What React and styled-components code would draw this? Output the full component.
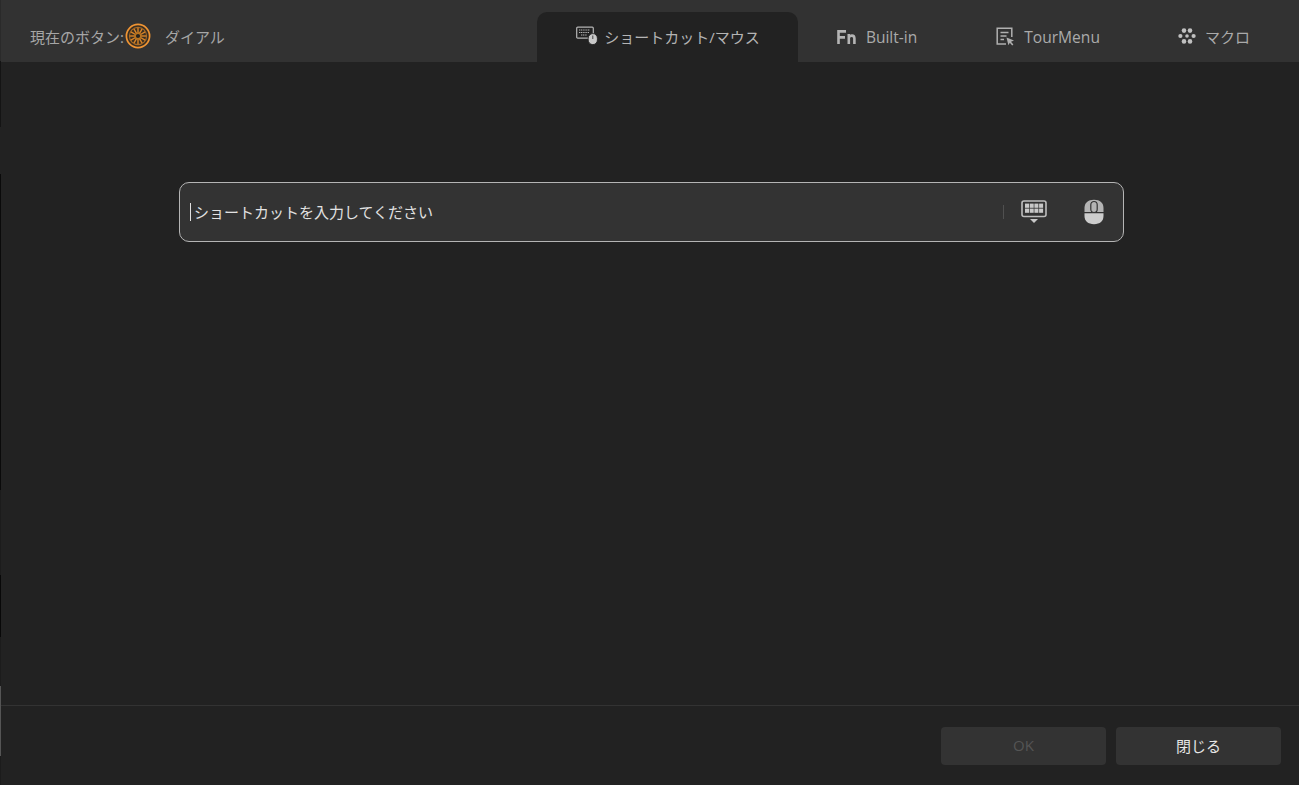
import React from "react";
import styled, { createGlobalStyle } from "styled-components";

const Global = createGlobalStyle`
  html, body { margin: 0; padding: 0; background: #222222; }
  body { font-family: "Open Sans", "Noto Sans CJK JP", sans-serif; overflow: hidden; }
  #root { height: 785px; }
`;

const Window = styled.div`
  height: 785px;
  display: flex;
  flex-direction: column;
  background: #222222;
  border-left: 1px solid transparent;
  border-image: linear-gradient(
      to bottom,
      #2a2a2a 0 62px,
      #141414 62px 128px,
      #222222 128px 175px,
      #0a0a0a 175px 490px,
      #1c1c1c 490px 575px,
      #080808 575px 636px,
      #1c1c1c 636px 685px,
      #555555 685px 755px,
      #1c1c1c 755px
    ) 1;
`;

const Header = styled.header`
  height: 62px;
  flex: none;
  display: flex;
  align-items: flex-end;
  justify-content: space-between;
  padding: 0 10px 0 29px;
  background: #323232;
`;

const Current = styled.div`
  height: 50px;
  box-sizing: border-box;
  padding-bottom: 2px;
  display: flex;
  align-items: center;
  font-size: 15px;
  color: #a6a6a6;
`;

const DialSlot = styled.span`
  display: flex;
  margin-left: 1px;
`;

const CurrentName = styled.span`
  margin-left: 14px;
`;

const Tabs = styled.nav`
  display: flex;
  height: 50px;
`;

const Tab = styled.div`
  display: flex;
  align-items: center;
  box-sizing: border-box;
  gap: ${(p) => p.$gap}px;
  padding: 0 ${(p) => p.$right}px ${(p) => (p.$size ? 1 : 2)}px 39px;
  font-size: ${(p) => p.$size || 15}px;
  color: ${(p) => (p.$active ? "#b4b4b4" : "#aaaaaa")};
  background: ${(p) => (p.$active ? "#222222" : "transparent")};
  border-radius: 10px 10px 0 0;
`;

const Main = styled.main`
  flex: 1;
  padding: 120px 175px 0 178px;
`;

const InputBox = styled.div`
  height: 60px;
  box-sizing: border-box;
  display: flex;
  align-items: center;
  padding: 0 19px 0 10px;
  background: #333333;
  border: 1px solid #b5b5b5;
  border-radius: 10px;
`;

const Caret = styled.span`
  width: 1px;
  height: 18px;
  background: #e0e0e0;
  margin-right: 3px;
`;

const Placeholder = styled.span`
  flex: 1;
  font-size: 15px;
  padding-bottom: 2px;
  color: #e2e2e2;
`;

const Separator = styled.span`
  width: 1px;
  height: 14px;
  background: #505050;
  margin-right: 17px;
`;

const KeyboardSlot = styled.span`
  display: flex;
  margin-right: 37px;
`;

const Footer = styled.footer`
  height: 80px;
  flex: none;
  box-sizing: border-box;
  display: flex;
  justify-content: flex-end;
  gap: 10px;
  padding: 21px 18px 0 0;
  border-top: 1px solid #333333;
`;

const Button = styled.button`
  width: 165px;
  height: 38px;
  padding: 0 0 2px;
  border: 0;
  border-radius: 4px;
  background: #333333;
  font: inherit;
  font-size: 15px;
  color: ${(p) => (p.disabled ? "#555555" : "#e6e6e6")};
`;

const DialIcon = () => {
  const spokes = Array.from({ length: 12 }, (_, i) => i * 30);
  return (
    <svg width="26" height="26" viewBox="0 0 26 26" fill="none">
      <circle cx="13" cy="13" r="11.6" stroke="#ef9433" strokeWidth="1.7" fill="#3a2f22" />
      <circle cx="13" cy="13" r="8.6" stroke="#a86a26" strokeWidth="1.1" />
      {spokes.map((a) => (
        <line key={a} x1="13" y1="4.8" x2="13" y2="10" stroke="#d98427" strokeWidth="1.4" transform={`rotate(${a} 13 13)`} />
      ))}
      <circle cx="13" cy="13" r="2.8" stroke="#b9741f" strokeWidth="1.4" fill="#26221d" />
    </svg>
  );
};

const ShortcutIcon = () => (
  <svg width="22" height="20" viewBox="0 0 22 20" fill="none">
    <rect x="0.7" y="1.2" width="16.6" height="11" rx="1" stroke="#b4b4b4" strokeWidth="1.2" />
    <path d="M3 4h11M3 6.5h10M5 9h6" stroke="#b4b4b4" strokeWidth="1.2" strokeDasharray="1.2 .6" />
    <rect x="12.2" y="7.6" width="9.2" height="11" rx="4.6" fill="#c8c8c8" stroke="#222" strokeWidth=".9" />
    <path d="M16.8 9.5v3.5" stroke="#444" strokeWidth="1" />
  </svg>
);

const FnIcon = () => (
  <svg width="19" height="14" viewBox="0 0 19 14" fill="none" stroke="#b4b4b4" strokeWidth="2.6">
    <path d="M1.5 14V1.4h7.5M1.5 7.4h6.5" />
    <path d="M11.8 14V4M11.8 7.5c1-2.4 5.6-3 5.6 1V14" />
  </svg>
);

const TourIcon = () => (
  <svg width="19" height="19" viewBox="0 0 19 19" fill="none" stroke="#b0b0b0" strokeWidth="1.5">
    <path d="M10 17H1.2V1.2h14.6V10" />
    <path d="M4.5 5.5h8M4.5 9h6M4.5 12.5h3.5" />
    <path d="M10.5 10.5l7.5 3-3 1.2 2.4 2.8-1.2 1-2.4-2.8-1.4 2.6z" fill="#b0b0b0" stroke="none" />
  </svg>
);

const MacroIcon = () => (
  <svg width="18" height="16" viewBox="0 0 18 16" fill="#c0c0c0">
    <circle cx="6" cy="2.6" r="2.3" />
    <circle cx="12" cy="2.6" r="2.3" />
    <circle cx="2.4" cy="8" r="2.1" />
    <circle cx="9" cy="8" r="1.8" />
    <circle cx="15.6" cy="8" r="2.1" />
    <circle cx="6" cy="13.4" r="2.3" />
    <circle cx="12" cy="13.4" r="2.3" />
  </svg>
);

const KeyboardIcon = () => {
  const keys = [];
  for (let row = 0; row < 2; row += 1) {
    for (let col = 0; col < 4; col += 1) {
      keys.push(<rect key={`${row}-${col}`} x={4 + col * 4.7} y={3.6 + row * 5} width="4" height="4.2" fill="#c8c8c8" />);
    }
  }
  return (
    <svg width="26" height="24" viewBox="0 0 26 24" fill="none">
      <rect x="1" y="1" width="24" height="15.5" rx="2" stroke="#bdbdbd" strokeWidth="1.6" />
      {keys}
      <path d="M9 19h8l-4 4z" fill="#c8c8c8" />
    </svg>
  );
};

const MouseIcon = () => (
  <svg width="20" height="26" viewBox="0 0 20 26" fill="none">
    <path d="M0.5 13V9C0.5 4 4 .8 10 .8S19.5 4 19.5 9v4z" fill="#b4b4b4" />
    <path d="M0.5 14.2h19V17c0 5-3.5 8.2-9.5 8.2S.5 22 .5 17z" fill="#cdcdcd" />
    <rect x="6.8" y="2.5" width="6.4" height="11" rx="3.2" fill="#b4b4b4" stroke="#333" strokeWidth="1.2" />
  </svg>
);

export default function App() {
  return (
    <Window>
      <Global />
      <Header>
        <Current>
          <span>現在のボタン:</span>
          <DialSlot><DialIcon /></DialSlot>
          <CurrentName>ダイアル</CurrentName>
        </Current>
        <Tabs>
          <Tab $active $gap={6} $right={38}><ShortcutIcon />ショートカット/マウス</Tab>
          <Tab $gap={10} $size={15.5} $right={40}><FnIcon />Built-in</Tab>
          <Tab $gap={9} $size={15.6} $right={39}><TourIcon />TourMenu</Tab>
          <Tab $gap={9} $right={39}><MacroIcon />マクロ</Tab>
        </Tabs>
      </Header>
      <Main>
        <InputBox>
          <Caret />
          <Placeholder>ショートカットを入力してください</Placeholder>
          <Separator />
          <KeyboardSlot><KeyboardIcon /></KeyboardSlot>
          <MouseIcon />
        </InputBox>
      </Main>
      <Footer>
        <Button disabled>OK</Button>
        <Button>閉じる</Button>
      </Footer>
    </Window>
  );
}
